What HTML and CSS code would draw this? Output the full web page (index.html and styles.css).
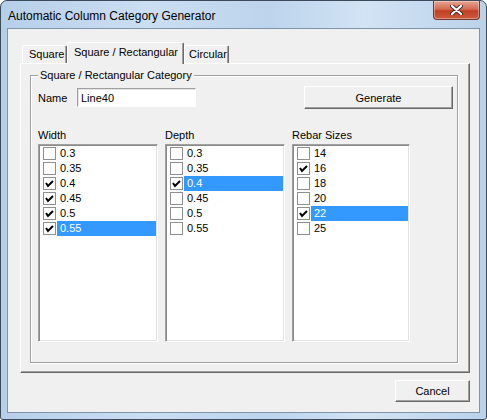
FILE: index.html
```html
<!DOCTYPE html>
<html>
<head>
<meta charset="utf-8">
<link rel="stylesheet" href="styles.css">
</head>
<body>
<div class="window">
  <div class="titlebar">
    <span class="title">Automatic Column Category Generator</span>
    <div class="close">
      <svg width="13" height="10" viewBox="0 0 13 10">
        <path d="M2 1 L11 9 M11 1 L2 9" stroke="#3a2a2a" stroke-width="4" stroke-linecap="round"/>
        <path d="M2 1 L11 9 M11 1 L2 9" stroke="#ffffff" stroke-width="2.2" stroke-linecap="round"/>
      </svg>
    </div>
  </div>
  <div class="client">
    <div class="tabs">
      <div class="tab t1">Square</div>
      <div class="tab sel">Square / Rectangular</div>
      <div class="tab t3">Circular</div>
    </div>
    <div class="panel">
      <fieldset class="group">
        <legend>Square / Rectangular Category</legend>
        <div class="toprow">
          <span class="lbl">Name</span>
          <div class="textbox">Line40</div>
          <div class="btn gen">Generate</div>
        </div>
        <div class="cols">
          <div class="col">
            <div class="collbl">Width</div>
            <div class="list">
              <div class="item"><span class="cb"></span><span class="txt">0.3</span></div>
              <div class="item"><span class="cb"></span><span class="txt">0.35</span></div>
              <div class="item"><span class="cb on"><svg width="11" height="11" viewBox="0 0 11 11"><path d="M2 5 L4 8 L9 3" fill="none" stroke="#000" stroke-width="2"/></svg></span><span class="txt">0.4</span></div>
              <div class="item"><span class="cb on"><svg width="11" height="11" viewBox="0 0 11 11"><path d="M2 5 L4 8 L9 3" fill="none" stroke="#000" stroke-width="2"/></svg></span><span class="txt">0.45</span></div>
              <div class="item"><span class="cb on"><svg width="11" height="11" viewBox="0 0 11 11"><path d="M2 5 L4 8 L9 3" fill="none" stroke="#000" stroke-width="2"/></svg></span><span class="txt">0.5</span></div>
              <div class="item"><span class="cb on"><svg width="11" height="11" viewBox="0 0 11 11"><path d="M2 5 L4 8 L9 3" fill="none" stroke="#000" stroke-width="2"/></svg></span><span class="txt hl">0.55</span></div>
            </div>
          </div>
          <div class="col">
            <div class="collbl">Depth</div>
            <div class="list">
              <div class="item"><span class="cb"></span><span class="txt">0.3</span></div>
              <div class="item"><span class="cb"></span><span class="txt">0.35</span></div>
              <div class="item"><span class="cb on"><svg width="11" height="11" viewBox="0 0 11 11"><path d="M2 5 L4 8 L9 3" fill="none" stroke="#000" stroke-width="2"/></svg></span><span class="txt hl">0.4</span></div>
              <div class="item"><span class="cb"></span><span class="txt">0.45</span></div>
              <div class="item"><span class="cb"></span><span class="txt">0.5</span></div>
              <div class="item"><span class="cb"></span><span class="txt">0.55</span></div>
            </div>
          </div>
          <div class="col c3">
            <div class="collbl">Rebar Sizes</div>
            <div class="list">
              <div class="item"><span class="cb"></span><span class="txt">14</span></div>
              <div class="item"><span class="cb on"><svg width="11" height="11" viewBox="0 0 11 11"><path d="M2 5 L4 8 L9 3" fill="none" stroke="#000" stroke-width="2"/></svg></span><span class="txt">16</span></div>
              <div class="item"><span class="cb"></span><span class="txt">18</span></div>
              <div class="item"><span class="cb"></span><span class="txt">20</span></div>
              <div class="item"><span class="cb on"><svg width="11" height="11" viewBox="0 0 11 11"><path d="M2 5 L4 8 L9 3" fill="none" stroke="#000" stroke-width="2"/></svg></span><span class="txt hl">22</span></div>
              <div class="item"><span class="cb"></span><span class="txt">25</span></div>
            </div>
          </div>
        </div>
      </fieldset>
    </div>
    <div class="bottom">
      <div class="btn cancel">Cancel</div>
    </div>
  </div>
</div>
</body>
</html>
```

FILE: styles.css
```css
* { box-sizing: border-box; }
html, body { margin: 0; padding: 0; background: #ffffff; }
body { font-family: "Liberation Sans", Arial, sans-serif; font-size: 11px; color: #000; }

.window {
  width: 487px;
  height: 420px;
  border: 1px solid #3c4a5a;
  border-radius: 7px 7px 3px 3px;
  padding: 0 6px 6px 6px;
  background: linear-gradient(to right, #b6cfe9 0%, #cbdef2 30%, #bcd4ec 55%, #d2e3f4 75%, #bad2ea 100%);
  display: flex;
  flex-direction: column;
}

.titlebar {
  height: 27px;
  display: flex;
  align-items: flex-start;
  justify-content: space-between;
}
.title {
  font-size: 12px;
  padding-left: 1px;
  margin-top: 8px;
  line-height: 14px;
  color: #000;
}
.close {
  width: 47px;
  height: 19px;
  border: 1px solid #6e3a32;
  border-top: none;
  border-radius: 0 0 4px 4px;
  background: linear-gradient(to bottom, #e8a493 0%, #d46b52 45%, #c23f22 55%, #cd5a3e 100%);
  display: flex;
  align-items: center;
  justify-content: center;
  box-shadow: inset 0 0 0 1px rgba(255,255,255,0.35);
}

.client {
  flex: 1;
  border: 1px solid #7f93ab;
  background: #f0f0f0;
  display: flex;
  flex-direction: column;
}

.tabs {
  margin: 13px 0 0 14px;
  height: 21px;
  display: flex;
  align-items: flex-end;
}
.tab {
  height: 18px;
  line-height: 16px;
  padding: 0 0 0 6px;
  border-top: 1px solid #fff;
  border-left: 1px solid #fff;
  border-right: 1px solid #696969;
  box-shadow: inset -1px 0 0 #a0a0a0;
  border-radius: 2px 2px 0 0;
  background: #f0f0f0;
  white-space: nowrap;
}
.t1 { width: 45px; }
.t3 { width: 45px; padding-left: 4px; }
.tab.sel {
  width: 117px;
  height: 22px;
  margin-bottom: -1px;
  line-height: 19px;
  padding-left: 6px;
  position: relative;
  z-index: 1;
}

.panel {
  margin-left: 12px;
  width: 450px;
  height: 310px;
  border-top: 1px solid #fff;
  border-left: 1px solid #fff;
  border-right: 1px solid #696969;
  border-bottom: 1px solid #696969;
  box-shadow: inset -1px -1px 0 #a0a0a0;
  padding: 4px 11px 9px 9px;
}

.group {
  margin: 0;
  height: 100%;
  border: 1px solid #a0a0a0;
  box-shadow: inset 1px 1px 0 #fff, 1px 1px 0 #fff;
  padding: 4px 0 0 7px;
  min-width: 0;
}
.group legend {
  padding: 0 2px;
  line-height: 14px;
  background: #f0f0f0;
}

.toprow {
  display: flex;
  align-items: center;
  height: 23px;
}
.lbl { width: 39px; }
.textbox {
  width: 119px;
  height: 19px;
  background: #fff;
  border-top: 1px solid #a0a0a0;
  border-left: 1px solid #a0a0a0;
  border-right: 1px solid #fff;
  border-bottom: 1px solid #fff;
  box-shadow: inset 1px 1px 0 #e3e3e3;
  padding: 2px 0 0 3px;
  line-height: 14px;
}
.btn {
  background: #f0f0f0;
  border-top: 1px solid #fff;
  border-left: 1px solid #fff;
  border-right: 1px solid #696969;
  border-bottom: 1px solid #696969;
  box-shadow: inset -1px -1px 0 #a0a0a0;
  display: flex;
  align-items: center;
  justify-content: center;
}
.gen {
  width: 149px;
  height: 23px;
  margin-left: 108px;
}

.cols {
  display: flex;
  gap: 7px;
  margin-top: 19px;
}
.col { width: 120px; }
.c3 { width: 118px; }
.collbl {
  height: 13px;
  line-height: 14px;
  margin-bottom: 3px;
}
.list {
  height: 198px;
  background: #fff;
  border-top: 1px solid #a0a0a0;
  border-left: 1px solid #a0a0a0;
  border-right: 1px solid #fff;
  border-bottom: 1px solid #fff;
  box-shadow: inset 1px 1px 0 #8a8a8a, inset -1px -1px 0 #e3e3e3;
  padding: 1px;
}
.item {
  height: 15px;
  display: flex;
  align-items: center;
}
.cb {
  width: 13px;
  height: 13px;
  margin-left: 3px;
  border: 1px solid #8e8f8f;
  background: #fff;
  display: flex;
  align-items: center;
  justify-content: center;
  flex: none;
}
.txt {
  flex: 1;
  height: 15px;
  line-height: 15px;
  margin-left: 1px;
  padding-left: 3px;
}
.txt.hl {
  background: #3399ff;
  color: #fff;
}

.bottom {
  display: flex;
  justify-content: flex-end;
  padding-right: 9px;
  margin-top: 7px;
}
.cancel {
  width: 75px;
  height: 22px;
}
```
